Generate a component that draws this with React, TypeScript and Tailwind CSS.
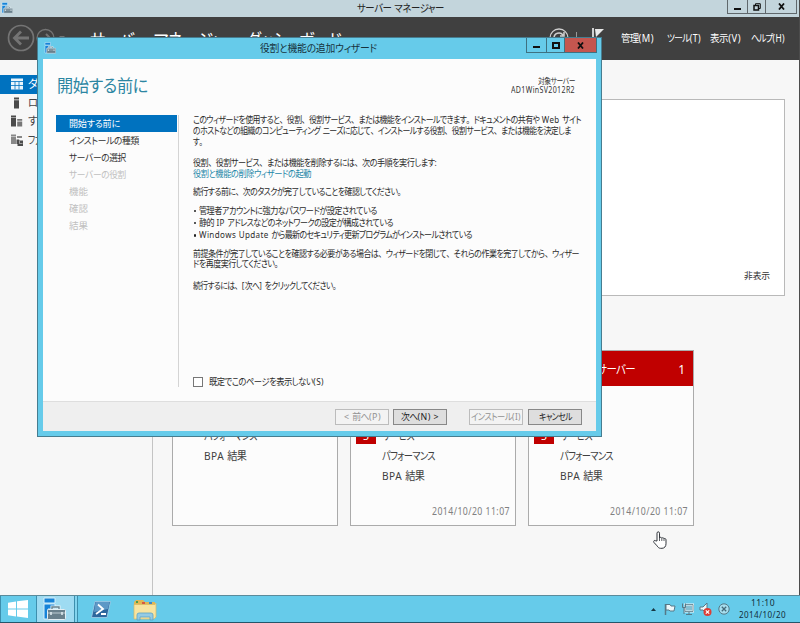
import { useLayoutEffect, useRef } from 'react';
import type { ReactNode } from 'react';
import { clsx } from 'clsx';

interface FitTextProps {
  text: string;
  width: number;
  className?: string;
}

const LATIN = /^[\x20-\x7e]/;
const PUNCTUATION = /^[、。]/;

// Only the Japanese runs take the negative spacing, Latin runs stay open.
function FitText({ text, width, className }: FitTextProps) {
  const ref = useRef<HTMLSpanElement>(null);
  const runs = text.match(/[\x20-\x7e]+|[、。]|[^\x20-\x7e、。]+/g) ?? [];

  useLayoutEffect(() => {
    const el = ref.current;
    if (!el) return;
    const parts = Array.from(el.querySelectorAll<HTMLElement>('[data-run=ja]'));
    parts.forEach((p) => { p.style.letterSpacing = '0px'; });
    el.style.transform = 'none';
    const natural = el.getBoundingClientRect().width;
    const count = parts.reduce((n, p) => n + (p.textContent ?? '').length, 0);
    if (count === 0) {
      el.style.transform = `scaleX(${width / natural})`;
      return;
    }
    // most of the correction by glyph width, the rest by spacing
    const scale = Math.pow(width / natural, 0.7);
    const spacing = (width / scale - natural) / count;
    parts.forEach((p) => { p.style.letterSpacing = `${spacing}px`; });
    el.style.transform = `scaleX(${scale})`;
  }, [text, width]);

  return (
    <span className={clsx('block shrink-0 whitespace-pre', className)} style={{ width }}>
      <span ref={ref} className="inline-block origin-left align-top">
        {runs.map((run, i) => {
          if (LATIN.test(run)) return <span key={i} className="tracking-[0.05em]">{run}</span>;
          return (
            <span
              key={i}
              data-run="ja"
              className={PUNCTUATION.test(run) ? "[font-feature-settings:'palt'_0]" : "[font-feature-settings:'palt']"}
            >
              {run}
            </span>
          );
        })}
      </span>
    </span>
  );
}

function ServerIcon({ className }: { className?: string }) {
  return (
    <svg viewBox="0 0 24 24" className={className}>
      <path d="M2 1h11v5H2z" fill="#1683d8" stroke="#d5effa" />
      <path d="M2 7h11v5H6v10H2z" fill="#1683d8" stroke="#d5effa" />
      <path d="M10 12v-2h7v2" fill="none" stroke="#e8f5fa" strokeWidth="3" />
      <path d="M10 12v-2h7v2" fill="none" stroke="#66818e" strokeWidth="1.4" />
      <rect x="5.500" y="12.500" width="18" height="10" rx="1" fill="#69808c" stroke="#e4eff4" />
      <path d="M6 16h17" stroke="#bdcbd2" />
      <path d="M9 15v3M20 15v3" stroke="#e2edf2" strokeWidth="1.500" />
    </svg>
  );
}

function MinimizeGlyph() {
  return <span className="mt-[4px] h-[2px] w-[7px] bg-[#111]" />;
}

function CloseGlyph() {
  return (
    <svg viewBox="0 0 7 7" className="size-[7px]">
      <path d="M1 .5 6 6.500M6 .5 1 6.500" stroke="#111" strokeWidth="1.800" />
    </svg>
  );
}

function DashboardIcon() {
  return (
    <svg viewBox="0 0 12 12" className="size-3">
      <path d="M0 .5h12v11H0z" fill="#e9f5fc" />
      <path d="M0 3.500h12M0 7.500h12M4 3.500v8M8 3.500v8" stroke="#0072bf" strokeWidth=".8" />
    </svg>
  );
}

function LocalServerIcon() {
  return (
    <svg viewBox="0 0 12 12" className="size-3">
      <path d="M3 .5h5v2H3zM3 3.200h5v8.300H3z" fill="#4b4b4b" />
    </svg>
  );
}

function AllServersIcon() {
  return (
    <svg viewBox="0 0 12 12" className="size-3">
      <path d="M0 .5h5v2H0zM0 3h5v8.500H0z" fill="#4b4b4b" />
      <path d="M6.200 4h5v1.800h-5zM6.200 6.400h5v5.100h-5z" fill="#777" />
    </svg>
  );
}

function FileServicesIcon() {
  return (
    <svg viewBox="0 0 12 12" className="size-3">
      <path d="M0 .5h5v2H0zM0 3h5v7H0zM6 2h5v2H6z" fill="#888" />
      <path d="M5.500 5.500h2.500l.7 1H12V12H6.500V10h-1z" fill="#4c4c4c" />
      <path d="M8.500 6.500v3h3" fill="none" stroke="#ddd" strokeWidth=".6" />
    </svg>
  );
}

const SIDEBAR = [
  { label: 'ダッシュボード', width: 70, icon: <DashboardIcon />, active: true },
  { label: 'ローカル サーバー', width: 82, icon: <LocalServerIcon /> },
  { label: 'すべてのサーバー', width: 80, icon: <AllServersIcon /> },
  { label: 'ファイル サービスと記憶域サービス', width: 120, icon: <FileServicesIcon /> },
];

const MENU = [
  { label: '管理(M)', width: 33, gap: 'mr-[13px]' },
  { label: 'ツール(T)', width: 34, gap: 'mr-[9px]' },
  { label: '表示(V)', width: 31, gap: 'mr-[10px]' },
  { label: 'ヘルプ(H)', width: 34, gap: 'mr-[14px]' },
];

const STEPS = [
  { label: '開始する前に', width: 51, state: 'current' },
  { label: 'インストールの種類', width: 70, state: 'open' },
  { label: 'サーバーの選択', width: 57, state: 'open' },
  { label: 'サーバーの役割', width: 57, state: 'disabled' },
  { label: '機能', width: 19, state: 'disabled' },
  { label: '確認', width: 19, state: 'disabled' },
  { label: '結果', width: 19, state: 'disabled' },
];

const TASKS = [
  { text: '管理者アカウントに強力なパスワードが設定されている', width: 178 },
  { text: '静的 IP アドレスなどのネットワークの設定が構成されている', width: 194 },
  { text: 'Windows Update から最新のセキュリティ更新プログラムがインストールされている', width: 273 },
];

function TitleBar() {
  return (
    <div className="flex h-[17px] shrink-0 bg-[#c3d5dc] text-[#222]">
      <ServerIcon className="ml-[1px] mt-[2px] size-[12px]" />
      <div className="flex flex-1 justify-center pl-[60px]">
        <FitText text="サーバー マネージャー" width={87} className="text-[10.5px] leading-[17px]" />
      </div>
      <div className="mr-[2px] flex h-[14px] border border-t-0 border-[#60686c]">
        <div className="flex w-[19px] items-center justify-center"><MinimizeGlyph /></div>
        <div className="flex w-[19px] items-center justify-center border-x border-[#60686c]">
          <svg viewBox="0 0 8 8" className="size-2">
            <path d="M2.500 2V.7h4.800v4.800H6" fill="none" stroke="#111" />
            <path d="M1 2.500h4.500v4.500H1z" fill="none" stroke="#111" strokeWidth="1.500" />
          </svg>
        </div>
        <div className="flex w-[30px] items-center justify-center pl-px"><CloseGlyph /></div>
      </div>
    </div>
  );
}

function HeaderBar() {
  return (
    <div className="flex h-[43px] shrink-0 bg-[#404040] text-white">
      <svg viewBox="0 0 66 43" className="h-[43px] w-[66px] shrink-0" fill="none" stroke="#747474">
        <circle cx="21" cy="21" r="12.500" strokeWidth="1.700" />
        <path d="M29 21H15M21 14.500 14.500 21l6.500 6.500" strokeWidth="2.800" />
        <circle cx="45.500" cy="21" r="8.500" strokeWidth="1.300" />
        <path d="M40 21h10M46 17l4 4-4 4" strokeWidth="2" />
        <path d="M59 19h6l-3 3z" fill="#747474" stroke="none" />
      </svg>
      <FitText
        text="サーバー マネージャー・ダッシュボード"
        width={251}
        className="ml-[24px] mt-[10px] text-[18.5px] leading-[26px]"
      />
      <svg viewBox="0 0 60 43" className="ml-[207px] h-[43px] w-[60px] shrink-0" fill="none" stroke="#cfcfcf">
        <circle cx="11" cy="21" r="9" strokeWidth="1.300" />
        <path d="M6 21a5 5 0 0 1 9-3M16 15v4h-4M16 21a5 5 0 0 1-9 3" strokeWidth="1.500" />
        <path d="M28.500 15v12" stroke="#999" />
        <path d="M45 11v20" strokeWidth="2" />
        <path d="M47 12h9l-8 8z" fill="#e8e8e8" stroke="none" />
      </svg>
      <div className="ml-auto flex">
        {MENU.map((m) => (
          <FitText key={m.label} text={m.label} width={m.width} className={clsx('text-[10px] leading-[43px]', m.gap)} />
        ))}
      </div>
    </div>
  );
}

function Sidebar() {
  return (
    <div className="w-[153px] shrink-0 overflow-hidden border-r border-[#c4c4c4] pt-[15px]">
      {SIDEBAR.map((item) => (
        <div
          key={item.label}
          className={clsx(
            'flex h-[18.5px] items-center pl-[11px]',
            item.active ? 'bg-[#0072bf] text-white' : 'text-[#444]',
          )}
        >
          {item.icon}
          <FitText text={item.label} width={item.width} className="ml-[5px] text-[11px] leading-[18px]" />
        </div>
      ))}
    </div>
  );
}

interface RoleCardProps {
  title: string;
  titleWidth: number;
  alert?: boolean;
  date?: string;
  children: ReactNode;
}

function RoleCard({ title, titleWidth, alert, date, children }: RoleCardProps) {
  return (
    <div className="flex h-[176px] w-[166px] flex-col border border-[#ababab] bg-[#fcfcfc]">
      <div className={clsx('flex h-[35px] items-center justify-between pl-8 pr-[8px] pt-[2px] text-white', alert ? 'bg-[#c00000]' : 'bg-[#5a5a5a]')}>
        <FitText text={title} width={titleWidth} className="text-[12px] leading-[31px]" />
        <span className="text-[12px] leading-[31px]">1</span>
      </div>
      {children}
      {date && <FitText text={date} width={78} className="mb-[6px] ml-auto mr-[5px] mt-auto text-[10px] leading-4 text-[#808080]" />}
    </div>
  );
}

function CardRow({ text, width, count }: { text: string; width: number; count?: number }) {
  return (
    <div className="flex h-5 items-center text-[#404040]">
      <div className="flex w-[31px] pl-[5px]">
        {count && <span className="h-4 w-5 bg-[#c00000] text-center text-[11px] leading-[15px] text-white">{count}</span>}
      </div>
      <FitText text={text} width={width} className="text-[11px] leading-5" />
    </div>
  );
}

function Dashboard() {
  return (
    <div className="flex min-w-0 flex-1 flex-col pl-[19px] pt-[39px]">
      <div className="flex h-[197px] w-[613px] items-end justify-end border border-[#b9b9b9] bg-white pb-[10px] pr-[14px]">
        <FitText text="非表示" width={26} className="text-[9px] leading-[18px] text-[#333]" />
      </div>
      <div className="mt-[54px] flex gap-3">
        <RoleCard title="ローカル サーバー" titleWidth={82}>
          <div className="mt-[40px]">
            <CardRow text="パフォーマンス" width={53} />
            <CardRow text="BPA 結果" width={42} />
          </div>
        </RoleCard>
        <RoleCard title="ファイル サービス" titleWidth={78} date="2014/10/20 11:07">
          <div className="mt-[40px]">
            <CardRow text="サービス" width={32} count={5} />
            <CardRow text="パフォーマンス" width={53} />
            <CardRow text="BPA 結果" width={42} />
          </div>
        </RoleCard>
        <RoleCard title="すべてのサーバー" titleWidth={74} alert date="2014/10/20 11:07">
          <div className="mt-[40px]">
            <CardRow text="サービス" width={32} count={5} />
            <CardRow text="パフォーマンス" width={53} />
            <CardRow text="BPA 結果" width={42} />
          </div>
        </RoleCard>
      </div>
    </div>
  );
}

function Taskbar() {
  return (
    <div className="flex h-[28px] shrink-0 border-b border-t border-b-[#24566a] border-t-[#5b8b9b] bg-[#66cbea]">
      <div className="flex w-[37px] items-center border-x border-[#3d8fae] pl-[7px]">
        <svg viewBox="0 0 20 18" className="h-[18px] w-5" fill="#fff">
          <path d="M0 2.700 8 1.500v7H0zM9 1.300 20 0v8.500H9zM0 9.500h8v7L0 15.300zM9 9.500h11V18L9 16.600z" />
        </svg>
      </div>
      <div className="flex w-[38px] items-center border-r border-[#3d8fae] bg-[#9edbf2] pl-[5px]">
        <ServerIcon className="size-6" />
      </div>
      <div className="w-[3px] border-r border-[#3d8fae] bg-[#83d4ee]" />
      <svg viewBox="0 0 20 17" className="ml-[13px] mt-[5px] h-[17px] w-5">
        <path d="M4 .5h15.500L16 16.500H.5z" fill="#2d679d" stroke="#a4cfe8" strokeWidth=".8" />
        <path d="M4.500 1h14l-1.500 7L3 11z" fill="#5d98c6" />
        <path d="M7 3.500 12 8l-7 5M10 13h5" fill="none" stroke="#fff" strokeWidth="1.800" />
      </svg>
      <svg viewBox="0 0 24 22" className="ml-[22px] mt-[3px] h-[22px] w-6">
        <path d="M1 3 3 1h7l2 2h10v16H1z" fill="#e1b653" />
        <path d="M3 2h2v2H3z" fill="#4a9d4b" />
        <path d="M9 3h3v2H9z" fill="#d65843" />
        <path d="M16 3h3v2h-3z" fill="#3e86c5" />
        <path d="M1 5.500h21l1-1.500v14l-2 2H1z" fill="#f7e4a0" stroke="#d9b961" strokeWidth=".7" />
        <path d="M4 21v-5q0-2 2-2h12q2 0 2 2v5h-3v-3H7v3z" fill="#94cbe4" stroke="#5ba2c5" strokeWidth=".8" />
      </svg>
      <div className="ml-auto flex">
        <svg viewBox="0 0 80 26" className="mr-[9px] h-[26px] w-[80px]">
          <path d="M1 15h5l-2.500-3z" fill="#173744" />
          <g fill="#eef7fa" stroke="#567987">
            <path d="M15.500 8v11" strokeWidth="1.500" />
            <path d="M16 8.500h4l1 1.500h4l-1 5h-4l-1-1h-3z" />
            <path d="M35 8.500h8v7h-8z" fill="#85bfd2" stroke="#eef7fa" strokeWidth="2" />
            <path d="M35 8.500h8v7h-8z" fill="none" strokeWidth=".8" />
            <path d="M39 16v2.500M36 18.500h6M32.500 7.500v4h3v-4M34 11v7" fill="none" />
            <path d="M50 11h3l4-4v11l-4-4h-3z" />
          </g>
          <circle cx="57.500" cy="16" r="4" fill="#dc3e36" />
          <path d="m55.800 14.300 3.400 3.400m0-3.400-3.400 3.400" stroke="#fff" strokeWidth="1.200" />
          <circle cx="74" cy="13" r="5.200" fill="#a6deef" stroke="#547987" />
          <path d="m71.800 10.800 4.400 4.400m0-4.400-4.400 4.400" stroke="#446b7a" strokeWidth="1.300" />
        </svg>
        <div className="mr-[14px] flex flex-col items-center pt-[1px] text-[9px] leading-3 text-[#122e3a]">
          <FitText text="11:10" width={24} />
          <FitText text="2014/10/20" width={47} />
        </div>
      </div>
    </div>
  );
}

function WizardButton({ text, width, disabled }: { text: string; width: number; disabled?: boolean }) {
  return (
    <button
      disabled={disabled}
      className={clsx(
        'flex h-4 w-[54px] items-center justify-center border text-[9.5px] leading-[14px]',
        disabled ? 'border-[#bcbcbc] bg-[#f3f3f3] text-[#929292]' : 'border-[#888] bg-[#dedede] text-[#222]',
      )}
    >
      <FitText text={text} width={width} />
    </button>
  );
}

function Wizard() {
  return (
    <div className="absolute left-[37px] top-[37px] flex h-[400px] w-[565px] flex-col border border-[#467d90] bg-[#66cbea] px-[5px] pb-[5px]">
      <div className="flex h-[21px] shrink-0">
        <ServerIcon className="ml-[1px] mt-[4px] size-[12px]" />
        <FitText text="役割と機能の追加ウィザード" width={117} className="ml-[204px] text-[10.5px] leading-[21px] text-[#17333d]" />
        <div className="-mr-[1px] ml-auto flex h-[15px] border border-t-0 border-[#3e7181]">
          <div className="flex w-[19px] items-center justify-center"><MinimizeGlyph /></div>
          <div className="flex w-[19px] items-center justify-center border-x border-[#3e7181]">
            <span className="h-[7px] w-[8px] border-2 border-[#111]" />
          </div>
          <div className="flex w-[31px] items-center justify-center bg-[#c4564f]"><CloseGlyph /></div>
        </div>
      </div>
      <div className="flex flex-1 flex-col bg-[#fcfcfc]">
        <div className="flex h-[56px] justify-between pl-[14px] pr-[21px]">
          <FitText text="開始する前に" width={91} className="mt-[14px] text-[17px] leading-[26px] text-[#2c86a2]" />
          <div className="flex flex-col items-end pt-[17px] text-[8px] leading-[9px] text-[#333]">
            <FitText text="対象サーバー" width={37} />
            <FitText text="AD1WinSV2012R2" width={64} />
          </div>
        </div>
        <div className="flex h-[286px]">
          <div className="ml-[13px] h-[272px] w-[123px] border-r border-[#d4d4d4]">
            {STEPS.map((s) => (
              <div
                key={s.label}
                className={clsx(
                  'flex h-[17px] w-[121px] items-center pl-[13px]',
                  s.state === 'current' && 'bg-[#0072bf] text-white',
                  s.state === 'open' && 'text-[#333]',
                  s.state === 'disabled' && 'text-[#c0c0c0]',
                )}
              >
                <FitText text={s.label} width={s.width} className="text-[9.5px] leading-[17px]" />
              </div>
            ))}
          </div>
          <div className="flex flex-col pl-[14px] text-[9.5px] leading-[10.8px] text-[#2b2b2b]">
            <FitText text="このウィザードを使用すると、役割、役割サービス、または機能をインストールできます。ドキュメントの共有や Web サイト" width={388} />
            <FitText text="のホストなどの組織のコンピューティング ニーズに応じて、インストールする役割、役割サービス、または機能を決定しま" width={378} />
            <FitText text="す。" width={13} />
            <div className="mt-[10.5px]">
              <FitText text="役割、役割サービス、または機能を削除するには、次の手順を実行します:" width={244} />
              <FitText text="役割と機能の削除ウィザードの起動" width={118} className="text-[#1c87a8]" />
            </div>
            <FitText text="続行する前に、次のタスクが完了していることを確認してください。" width={212} className="mt-[8px]" />
            <ul className="mt-[6.5px]">
              {TASKS.map((t) => (
                <li key={t.text} className="flex h-[12.3px] items-center">
                  <span className="ml-[0.5px] mr-[3px] size-[2.5px] rounded-full bg-[#222]" />
                  <FitText text={t.text} width={t.width} />
                </li>
              ))}
            </ul>
            <FitText text="前提条件が完了していることを確認する必要がある場合は、ウィザードを閉じて、それらの作業を完了してから、ウィザー" width={386} className="mt-[7px]" />
            <FitText text="ドを再度実行してください。" width={89} />
            <FitText text="続行するには、[次へ] をクリックしてください。" width={147} className="mt-[11px]" />
            <label className="mb-[12px] mt-auto flex items-center">
              <input type="checkbox" className="size-[10px] appearance-none border border-[#777] bg-white" />
              <FitText text="既定でこのページを表示しない(S)" width={115} className="ml-[6px] leading-[14px]" />
            </label>
          </div>
        </div>
        <div className="flex flex-1 justify-end border-t border-[#dedede] bg-[#efefef] pr-[14px] pt-[7px]">
          <WizardButton text="< 前へ(P)" width={37} disabled />
          <div className="ml-[4px] mr-[22px]">
            <WizardButton text="次へ(N) >" width={38} />
          </div>
          <WizardButton text="インストール(I)" width={50} disabled />
          <div className="ml-[5px]">
            <WizardButton text="キャンセル" width={33} />
          </div>
        </div>
      </div>
    </div>
  );
}

export default function App() {
  return (
    <div className="relative flex h-[623px] w-[800px] flex-col overflow-hidden bg-[#f7f7f7] font-['Noto_Sans','Noto_Sans_CJK_JP',sans-serif]">
      <div className="flex h-[595px] shrink-0 flex-col border-r border-[#4c4c4c]">
        <TitleBar />
        <HeaderBar />
        <div className="flex min-h-0 flex-1">
          <Sidebar />
          <Dashboard />
        </div>
      </div>
      <Taskbar />
      <Wizard />
      {/* Hand pointer */}
      <svg viewBox="0 0 14 18" className="absolute left-[653px] top-[531px] h-[18px] w-[14px]">
        <path
          d="M4 10V2.200C4 .3 6.500.3 6.500 2.200V7c.3-1 2-1 2.300.3.500-1 2-.7 2.200.5.600-.7 2-.3 2 1v4c0 2.500-1.500 4.500-4 4.500H7.500c-1.500 0-2.500-1-3.500-2.500L1 11.500c-1-1.500.5-2.700 1.700-1.700z"
          fill="#fff"
          stroke="#33373d"
        />
        <path d="M6.500 7v3M8.800 7.500V10M11 8v2" stroke="#33373d" strokeWidth=".8" />
      </svg>
    </div>
  );
}
